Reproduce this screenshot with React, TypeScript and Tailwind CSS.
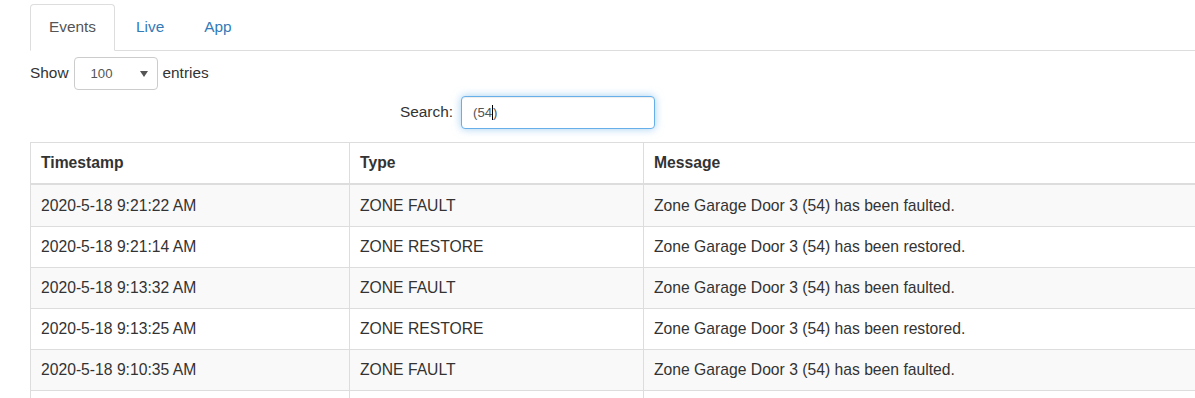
import React from "react";

const rows = [
  ["2020-5-18 9:21:22 AM", "ZONE FAULT", "Zone Garage Door 3 (54) has been faulted."],
  ["2020-5-18 9:21:14 AM", "ZONE RESTORE", "Zone Garage Door 3 (54) has been restored."],
  ["2020-5-18 9:13:32 AM", "ZONE FAULT", "Zone Garage Door 3 (54) has been faulted."],
  ["2020-5-18 9:13:25 AM", "ZONE RESTORE", "Zone Garage Door 3 (54) has been restored."],
  ["2020-5-18 9:10:35 AM", "ZONE FAULT", "Zone Garage Door 3 (54) has been faulted."],
  ["", "", ""],
];

export default function App() {
  return (
    <div className="w-[1195px] h-[398px] overflow-hidden bg-white pl-[30px] font-['Liberation_Sans',Arial,sans-serif] text-[15.4px] leading-[22px] text-[#333]">
      <ul className="mt-[4px] flex border-b border-[#ddd]">
        <li className="-mb-px mr-[2px]">
          <div className="rounded-t-[4px] border border-[#ddd] border-b-transparent bg-white px-[18px] pt-[10px] pb-[12px] leading-[23px] text-[#555]">
            Events
          </div>
        </li>
        <li className="-mb-px mr-[2px]">
          <div className="rounded-t-[4px] border border-transparent px-[18px] pt-[10px] pb-[12px] leading-[23px] text-[#337ab7]">
            Live
          </div>
        </li>
        <li className="-mb-px mr-[2px]">
          <div className="rounded-t-[4px] border border-transparent px-[18px] pt-[10px] pb-[12px] leading-[23px] text-[#337ab7]">
            App
          </div>
        </li>
      </ul>

      <div className="mt-[6px] flex items-center leading-[20px]">
        <span className="-mt-[2px]">Show</span>
        <div className="mx-[5px] flex h-[33px] w-[84px] items-center justify-between rounded-[4px] border border-[#ccc] bg-white pl-[16px] pr-[9px] text-[13.2px] text-[#555]">
          <span>100</span>
          <svg width="8" height="6" viewBox="0 0 8 6">
            <path d="M0 0 H8 L4 6 Z" fill="#555" />
          </svg>
        </div>
        <span className="-mt-[2px]">entries</span>
      </div>

      <div className="mt-[6px] flex w-[625px] items-center justify-end leading-[20px]">
        <span className="-mt-[2px]">Search:</span>
        <div className="ml-[8px] flex h-[33px] w-[194px] items-center rounded-[4px] border border-[#66afe9] bg-white pl-[11px] text-[13.2px] text-[#555] shadow-[inset_0_1px_1px_rgba(0,0,0,0.075),0_0_8px_rgba(102,175,233,0.6)]">
          <span>(54</span>
          <span className="inline-block h-[15px] w-px bg-black" />
          <span>)</span>
        </div>
      </div>

      <table className="mt-[13px] w-[1260px] table-fixed border-collapse text-[15.7px]">
        <colgroup>
          <col className="w-[319px]" />
          <col className="w-[294px]" />
          <col />
        </colgroup>
        <thead>
          <tr>
            <th className="border border-b-2 border-[#ddd] px-[10px] py-[9px] text-left font-bold">Timestamp</th>
            <th className="border border-b-2 border-[#ddd] px-[10px] py-[9px] text-left font-bold">Type</th>
            <th className="border border-b-2 border-[#ddd] px-[10px] py-[9px] text-left font-bold">Message</th>
          </tr>
        </thead>
        <tbody>
          {rows.map((r, i) => (
            <tr key={i} className={i % 2 === 0 ? "bg-[#f9f9f9]" : "bg-white"}>
              {r.map((c, j) => (
                <td
                  key={j}
                  className={
                    i === 0
                      ? "h-[42px] border border-[#ddd] px-[10px] pt-[10px] pb-[9px]"
                      : "h-[41px] border border-[#ddd] px-[10px] py-[9px]"
                  }
                >
                  {c}
                </td>
              ))}
            </tr>
          ))}
        </tbody>
      </table>
    </div>
  );
}
